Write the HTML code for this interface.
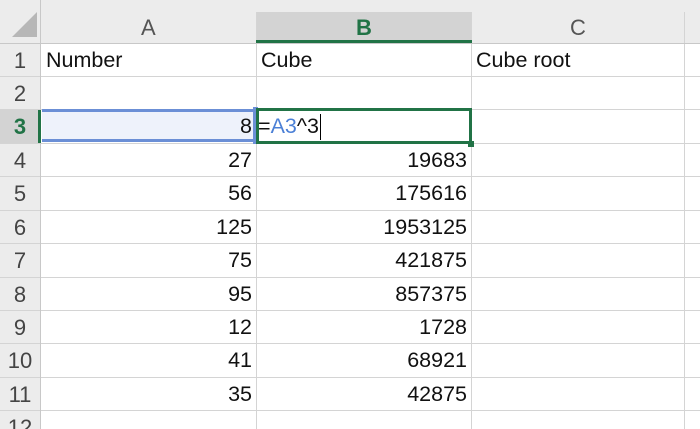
<!DOCTYPE html><html><head><style>
html,body{margin:0;width:700px;height:429px;overflow:hidden}
body{background:#fff;font-family:"Liberation Sans",sans-serif;position:relative}
.a{position:absolute;box-sizing:border-box}
.hl{position:absolute;left:0;width:700px;height:1px;background:#d4d4d4}
.vl{position:absolute;top:0;height:429px;width:1px;background:#d4d4d4}
.rh{position:absolute;left:0;width:40px;text-align:center;font-size:22px;color:#444;line-height:33px}
.t{position:absolute;font-size:21.5px;color:#111;line-height:33px;white-space:nowrap}
.r{text-align:right}
</style></head><body>
<div class="a" style="left:0;top:0;width:700px;height:43px;background:#ececec"></div>
<div class="a" style="left:0;top:0;width:41px;height:429px;background:#ececec"></div>
<div class="a" style="left:256px;top:12px;width:215px;height:31px;background:#d3d3d3"></div>
<div class="a" style="left:0;top:110px;width:40px;height:33px;background:#d3d3d3"></div>
<svg class="a" style="left:12px;top:12px" width="26" height="26"><polygon points="25,0 25,25 0,25" fill="#b7b7b7"/></svg>
<div class="vl" style="left:256px;top:12px;height:417px"></div>
<div class="vl" style="left:471px;top:12px;height:417px"></div>
<div class="vl" style="left:684px;top:12px;height:417px"></div>
<div class="hl" style="top:43px;background:#c8c8c8"></div>
<div class="hl" style="top:76px"></div><div class="hl" style="top:109px"></div><div class="hl" style="top:143px"></div>
<div class="hl" style="top:176px"></div><div class="hl" style="top:210px"></div><div class="hl" style="top:243px"></div>
<div class="hl" style="top:277px"></div><div class="hl" style="top:310px"></div><div class="hl" style="top:343px"></div>
<div class="hl" style="top:377px"></div><div class="hl" style="top:410px"></div>
<div class="a" style="left:0;top:0;width:41px;height:429px;border-right:1px solid #c8c8c8"></div>
<div class="t" style="left:141px;top:11px;color:#555;font-size:22px">A</div>
<div class="t" style="left:356px;top:11px;color:#217346;font-weight:bold;font-size:22px">B</div>
<div class="t" style="left:570px;top:11px;color:#555;font-size:22px">C</div>
<div class="a" style="left:256px;top:40px;width:216px;height:3px;background:#217346"></div>
<div class="a" style="left:38px;top:110px;width:3px;height:33px;background:#217346"></div>
<div class="rh" style="top:44px">1</div><div class="rh" style="top:77px">2</div>
<div class="rh" style="top:110px;color:#217346;font-weight:bold">3</div>
<div class="rh" style="top:144px">4</div><div class="rh" style="top:177px">5</div><div class="rh" style="top:211px">6</div>
<div class="rh" style="top:244px">7</div><div class="rh" style="top:278px">8</div><div class="rh" style="top:311px">9</div>
<div class="rh" style="top:344px">10</div><div class="rh" style="top:378px">11</div><div class="rh" style="top:411px">12</div>
<div class="a" style="left:42px;top:109px;width:213px;height:33px;background:#eef2fb;border-top:3px solid #6b8fd6;border-bottom:3px solid #6b8fd6"></div>
<div class="a" style="left:253px;top:107px;width:5px;height:37px;background:#6b8fd6"></div>
<div class="a" style="left:256px;top:108px;width:216px;height:36px;border:3px solid #217346;background:#fff"></div>
<div class="a" style="left:468px;top:141px;width:6px;height:6px;background:#217346"></div>
<div class="t" style="left:46px;top:44px">Number</div>
<div class="t" style="left:261px;top:44px">Cube</div>
<div class="t" style="left:476px;top:44px">Cube root</div>
<div class="t" style="left:258px;top:110px">=<span style="color:#4a7fd6">A3</span>^3<span style="display:inline-block;width:1px;height:26px;background:#000;vertical-align:middle;margin-left:1px"></span></div>
<div class="t r" style="left:42px;width:210px;top:110px">8</div>
<div class="t r" style="left:42px;width:210px;top:144px">27</div><div class="t r" style="left:257px;width:210px;top:144px">19683</div>
<div class="t r" style="left:42px;width:210px;top:177px">56</div><div class="t r" style="left:257px;width:210px;top:177px">175616</div>
<div class="t r" style="left:42px;width:210px;top:211px">125</div><div class="t r" style="left:257px;width:210px;top:211px">1953125</div>
<div class="t r" style="left:42px;width:210px;top:244px">75</div><div class="t r" style="left:257px;width:210px;top:244px">421875</div>
<div class="t r" style="left:42px;width:210px;top:278px">95</div><div class="t r" style="left:257px;width:210px;top:278px">857375</div>
<div class="t r" style="left:42px;width:210px;top:311px">12</div><div class="t r" style="left:257px;width:210px;top:311px">1728</div>
<div class="t r" style="left:42px;width:210px;top:344px">41</div><div class="t r" style="left:257px;width:210px;top:344px">68921</div>
<div class="t r" style="left:42px;width:210px;top:378px">35</div><div class="t r" style="left:257px;width:210px;top:378px">42875</div>
</body></html>
